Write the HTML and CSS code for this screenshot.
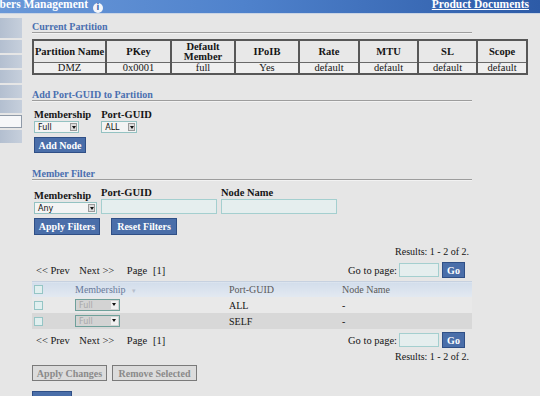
FILE: index.html
```html
<!DOCTYPE html>
<html lang="en">

<head>
    <meta charset="UTF-8">
    <meta name="viewport" content="width=device-width, initial-scale=1.0">
    <title>Partition Members Management</title>
    <link rel="stylesheet" href="styles.css">
</head>

<body>
    <div class="topbar">
        <h1 class="title">Members Management <span class="info">i</span></h1>
        <a class="docs" href="#">Product Documents</a>
    </div>

    <div class="layout">
        <ul class="sidenav">
            <li class="first"></li>
            <li></li>
            <li></li>
            <li></li>
            <li></li>
            <li></li>
            <li class="active"></li>
            <li></li>
        </ul>

        <div class="main">
            <h2 class="section">Current Partition</h2>
            <table class="partition">
                <colgroup>
                    <col style="width: 73px">
                    <col style="width: 65px">
                    <col style="width: 64px">
                    <col style="width: 64px">
                    <col style="width: 60px">
                    <col style="width: 59px">
                    <col style="width: 59px">
                    <col style="width: 50px">
                </colgroup>
                <tr>
                    <th>Partition Name</th>
                    <th>PKey</th>
                    <th>Default<br>Member</th>
                    <th>IPoIB</th>
                    <th>Rate</th>
                    <th>MTU</th>
                    <th>SL</th>
                    <th>Scope</th>
                </tr>
                <tr>
                    <td>DMZ</td>
                    <td>0x0001</td>
                    <td>full</td>
                    <td>Yes</td>
                    <td>default</td>
                    <td>default</td>
                    <td>default</td>
                    <td>default</td>
                </tr>
            </table>

            <h2 class="section add-title">Add Port-GUID to Partition</h2>
            <div class="fields add-fields">
                <div class="field">
                    <label>Membership</label>
                    <span class="select w45"><span class="value">Full</span><span class="arrow"></span></span>
                </div>
                <div class="field">
                    <label>Port-GUID</label>
                    <span class="select w36"><span class="value">ALL</span><span class="arrow"></span></span>
                </div>
            </div>
            <button class="btn add-node">Add Node</button>

            <h2 class="section filter-title">Member Filter</h2>
            <div class="fields filter-fields">
                <div class="field">
                    <label>Membership</label>
                    <span class="select w63"><span class="value">Any</span><span class="arrow"></span></span>
                </div>
                <div class="field">
                    <label>Port-GUID</label>
                    <input class="text-input wide" type="text">
                </div>
                <div class="field">
                    <label>Node Name</label>
                    <input class="text-input wide" type="text">
                </div>
            </div>
            <div class="buttons filter-buttons">
                <button class="btn">Apply Filters</button>
                <button class="btn">Reset Filters</button>
            </div>

            <div class="results">Results: 1 - 2 of 2.</div>
            <div class="pager">
                <div class="pages">
                    <span class="prev">&lt;&lt; Prev</span>
                    <span class="next">Next &gt;&gt;</span>
                    <span>Page <span class="current">[1]</span></span>
                </div>
                <div class="goto">
                    Go to page: <input class="text-input page-input" type="text">
                    <button class="btn go">Go</button>
                </div>
            </div>

            <table class="grid">
                <colgroup>
                    <col style="width: 40px">
                    <col style="width: 155px">
                    <col style="width: 113px">
                    <col style="width: 132px">
                </colgroup>
                <tr>
                    <th><span class="check"></span></th>
                    <th class="sortable">Membership <span class="sort">&#9662;</span></th>
                    <th>Port-GUID</th>
                    <th>Node Name</th>
                </tr>
                <tr class="odd">
                    <td><span class="check"></span></td>
                    <td><span class="select disabled w45"><span class="value">Full</span><span class="arrow"></span></span></td>
                    <td>ALL</td>
                    <td>-</td>
                </tr>
                <tr class="even">
                    <td><span class="check"></span></td>
                    <td><span class="select disabled w45"><span class="value">Full</span><span class="arrow"></span></span></td>
                    <td>SELF</td>
                    <td>-</td>
                </tr>
            </table>

            <div class="pager bottom-pager">
                <div class="pages">
                    <span class="prev">&lt;&lt; Prev</span>
                    <span class="next">Next &gt;&gt;</span>
                    <span>Page <span class="current">[1]</span></span>
                </div>
                <div class="goto">
                    Go to page: <input class="text-input page-input" type="text">
                    <button class="btn go">Go</button>
                </div>
            </div>
            <div class="results bottom-results">Results: 1 - 2 of 2.</div>

            <div class="buttons action-buttons">
                <button class="btn off">Apply Changes</button>
                <button class="btn off">Remove Selected</button>
            </div>
            <div class="back-bar"></div>
        </div>
    </div>
</body>

</html>
```

FILE: styles.css
```css
/* General styling */
body {
    margin: 0;
    background: #e6e6e6;
    font-family: "Liberation Serif", "Times New Roman", serif;
    font-size: 10px;
    color: #151515;
    overflow: hidden;
}

/* Top bar */
.topbar {
    display: flex;
    justify-content: space-between;
    align-items: flex-start;
    height: 13px;
    overflow: hidden;
    background: linear-gradient(to right, #6a98d8, #4f82cc 45%, #2d5ba7);
    border-bottom: 1px solid #c9d4e4;
}

.title {
    margin: 0 0 0 -26px;
    font-size: 11.5px;
    line-height: 8px;
    font-weight: bold;
    color: #fff;
    white-space: nowrap;
}

.info {
    display: inline-block;
    width: 10px;
    height: 10px;
    margin-left: 2px;
    border-radius: 50%;
    background: #f4f6fa;
    color: #3d64a8;
    font-family: "DejaVu Sans", sans-serif;
    font-size: 8px;
    line-height: 10px;
    text-align: center;
    vertical-align: -2px;
}

.docs {
    margin: 0 11px 0 0;
    font-size: 11.5px;
    line-height: 8px;
    font-weight: bold;
    color: #fff;
}

/* Layout */
.layout {
    display: flex;
}

.sidenav {
    list-style: none;
    margin: 4px 0 0;
    padding: 0;
    width: 22px;
}

.sidenav li {
    height: 13px;
    margin-bottom: 2px;
    background: linear-gradient(to right, #b3bfd0, #c6cfdc);
}

.sidenav li.first {
    height: 20px;
}

.sidenav li.active {
    box-sizing: border-box;
    background: #f6f7f9;
    border: 1px solid #8f9aa8;
    border-left: none;
}

.main {
    width: 440px;
    margin-left: 10px;
    padding-top: 7px;
}

/* Section titles */
.section {
    margin: 0;
    font-size: 10px;
    line-height: 11px;
    color: #4a6fb0;
    border-bottom: 1px solid #9d9d9d;
    box-shadow: 0 1px 0 #f2f2f2;
}

.add-title {
    margin-top: 14px;
}

.filter-title {
    margin-top: 15px;
}

/* Partition table */
.partition {
    width: 494px;
    margin-top: 6px;
    border-collapse: collapse;
    table-layout: fixed;
    border: 2px solid #575757;
    font-size: 10.5px;
}

.partition th,
.partition td {
    padding: 0;
    text-align: center;
    border-top: 1px solid #6a6a6a;
    border-bottom: 1px solid #6a6a6a;
    border-left: 2px solid #575757;
    border-right: 2px solid #575757;
}

.partition th {
    height: 21px;
    line-height: 10px;
    background: #e8e8e8;
}

.partition td {
    height: 10px;
    line-height: 10px;
    background: #efefef;
}

/* Form fields */
.fields {
    display: flex;
    align-items: flex-end;
    padding-left: 2px;
}

.add-fields {
    margin-top: 8px;
    gap: 10px;
}

.filter-fields {
    margin-top: 7px;
    gap: 4px;
}

.field {
    display: flex;
    flex-direction: column;
}

.field label {
    font-size: 10.5px;
    line-height: 12px;
    font-weight: bold;
}

.select {
    box-sizing: border-box;
    display: flex;
    align-items: center;
    justify-content: space-between;
    height: 12px;
    padding: 0 1px 0 3px;
    background: #f3f4f4;
    border: 1px solid #94c2c2;
    font-family: "DejaVu Sans", sans-serif;
    font-size: 8px;
    color: #111;
}

.w45 { width: 45px; }
.w36 { width: 36px; }
.w63 { width: 63px; }

.select .arrow {
    position: relative;
    box-sizing: border-box;
    width: 7px;
    height: 8px;
    background: #dcdcdc;
    border: 1px solid #9a9a9a;
}

.select .arrow::after {
    content: "";
    position: absolute;
    left: 1px;
    top: 2px;
    border-left: 2px solid transparent;
    border-right: 2px solid transparent;
    border-top: 3px solid #111;
}

.select.disabled {
    background: #d3d3d3;
    border-color: #6fa09a;
    color: #a8a8a8;
}

.select.disabled .arrow {
    background: #f0f0f0;
    border: none;
}

.text-input {
    box-sizing: border-box;
    height: 15px;
    margin: 0;
    padding: 0;
    background: #e5eeee;
    border: 1px solid #a4cfcf;
}

.wide {
    width: 116px;
}

/* Buttons */
.btn {
    box-sizing: border-box;
    height: 16px;
    padding: 0;
    font-family: "Liberation Serif", "Times New Roman", serif;
    font-size: 10px;
    font-weight: bold;
    white-space: nowrap;
    color: #fff;
    background: #4a6ea9;
    border: 1px solid #2f4f86;
    cursor: pointer;
}

.add-node {
    display: block;
    width: 52px;
    margin: 4px 0 0 2px;
}

.buttons {
    display: flex;
}

.filter-buttons {
    gap: 11px;
    margin: 4px 0 0 2px;
}

.filter-buttons .btn {
    width: 66px;
    height: 17px;
}

.btn.off {
    color: #8a8a8a;
    background: #dcdcdc;
    border-color: #7a7a7a;
}

.action-buttons {
    gap: 5px;
    margin-top: 2px;
}

.action-buttons .btn:first-child {
    width: 75px;
}

.action-buttons .btn:last-child {
    width: 85px;
}

.back-bar {
    width: 40px;
    height: 16px;
    margin-top: 10px;
    background: #4a6ea9;
    border: 1px solid #2f4f86;
    box-sizing: border-box;
}

/* Results and paging */
.results {
    margin-top: 11px;
    padding-right: 3px;
    text-align: right;
    line-height: 12px;
}

.bottom-results {
    margin-top: 3px;
}

.pager {
    display: flex;
    justify-content: space-between;
    align-items: center;
    margin-top: 4px;
    padding: 0 7px 0 4px;
    font-size: 10.5px;
}

.bottom-pager {
    margin-top: 3px;
}

.prev {
    margin-right: 7px;
}

.next {
    margin-right: 10px;
}

.current {
    margin-left: 3px;
}

.goto {
    display: flex;
    align-items: center;
}

.page-input {
    width: 40px;
    height: 14px;
    margin: 0 3px 0 2px;
}

.go {
    width: 23px;
}

/* Members grid */
.grid {
    width: 440px;
    margin-top: 3px;
    border-collapse: collapse;
    table-layout: fixed;
    font-size: 10px;
}

.grid th,
.grid td {
    padding: 0 0 0 2px;
    text-align: left;
}

.grid th {
    height: 15px;
    font-weight: normal;
    color: #5a5a5a;
    background: linear-gradient(#d2ddeb, #e3e9f1);
    border-top: 1px solid #c6d1e0;
}

.grid th.sortable {
    color: #67799a;
}

.grid td {
    height: 16px;
}

.grid tr.odd td {
    background: #e9e9e9;
}

.grid tr.even td {
    background: #d8d8d8;
}

.grid th:nth-child(2),
.grid td:nth-child(2) {
    padding-left: 3px;
}

.check {
    display: block;
    box-sizing: border-box;
    width: 9px;
    height: 9px;
    background: #e1efef;
    border: 1px solid #95c5c5;
}

.sort {
    margin-left: 4px;
    font-size: 7px;
    color: #b7bfcc;
}
```
